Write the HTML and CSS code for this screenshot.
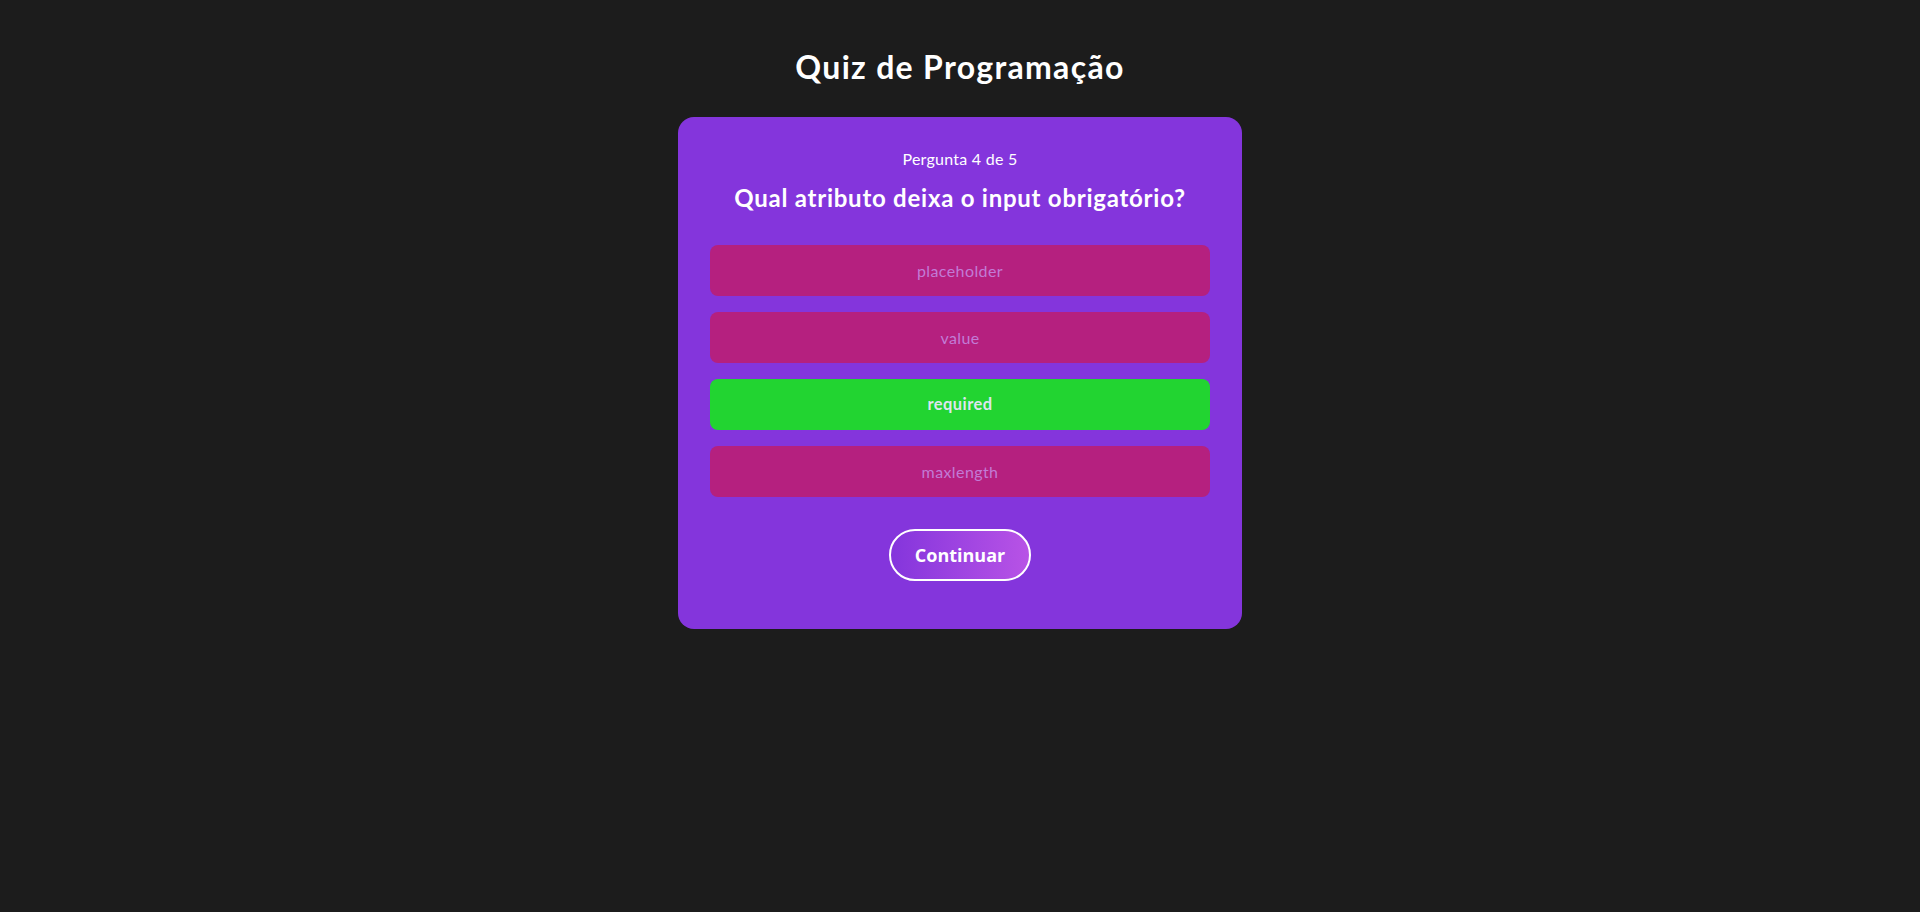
FILE: index.html
```html
<!DOCTYPE html>
<html lang="pt-BR">
<head>
<meta charset="utf-8">
<title>Quiz de Programação</title>
<link rel="stylesheet" href="styles.css">
</head>
<body>
<main class="page">
  <h1 class="title">Quiz de Programação</h1>
  <section class="card">
    <p class="counter">Pergunta 4 de 5</p>
    <h2 class="question">Qual atributo deixa o input obrigatório?</h2>
    <div class="options">
      <button class="option wrong" disabled>placeholder</button>
      <button class="option wrong" disabled>value</button>
      <button class="option right" disabled>required</button>
      <button class="option wrong" disabled>maxlength</button>
    </div>
    <button class="next">Continuar</button>
  </section>
</main>
</body>
</html>
```

FILE: styles.css
```css
html, body {
  margin: 0;
  padding: 0;
}
body {
  background: #1c1c1c;
  color: #ffffff;
  font-family: "Lato", "Open Sans", sans-serif;
  min-height: 912px;
}
.page {
  display: flex;
  flex-direction: column;
  align-items: center;
}
.title {
  margin: 48px 0 31px;
  font-size: 32px;
  line-height: 38px;
  font-weight: 700;
  letter-spacing: 1.3px;
}
.card {
  box-sizing: border-box;
  width: 564px;
  background: #8435dc;
  border-radius: 16px;
  padding: 32px 32px 48px;
  display: flex;
  flex-direction: column;
  align-items: center;
}
.counter {
  margin: 0;
  font-size: 16px;
  line-height: 19px;
  letter-spacing: 0.25px;
}
.question {
  margin: 16px 0 33px;
  font-size: 24px;
  line-height: 28px;
  font-weight: 700;
  letter-spacing: 0.75px;
}
.options {
  width: 100%;
  display: flex;
  flex-direction: column;
  gap: 16px;
}
.option {
  box-sizing: border-box;
  width: 100%;
  height: 51px;
  border: none;
  border-radius: 8px;
  font-family: inherit;
  font-size: 16px;
  line-height: 19px;
  padding: 16px;
  text-align: center;
  letter-spacing: 0.4px;
}
.option.wrong {
  background: #b5207f;
  color: #c27bd6;
}
.option.right {
  background: #22d431;
  color: #dde6ef;
  font-weight: 700;
  font-size: 16.5px;
}
.next {
  margin-top: 32px;
  box-sizing: border-box;
  width: 142px;
  height: 52px;
  border: 2px solid #ffffff;
  border-radius: 26px;
  background: linear-gradient(90deg, #8435dc 0%, #b853e6 100%);
  color: #ffffff;
  font-family: "Open Sans", "Lato", sans-serif;
  font-weight: 700;
  font-size: 18px;
  line-height: 22px;
  padding: 0;
}
```
